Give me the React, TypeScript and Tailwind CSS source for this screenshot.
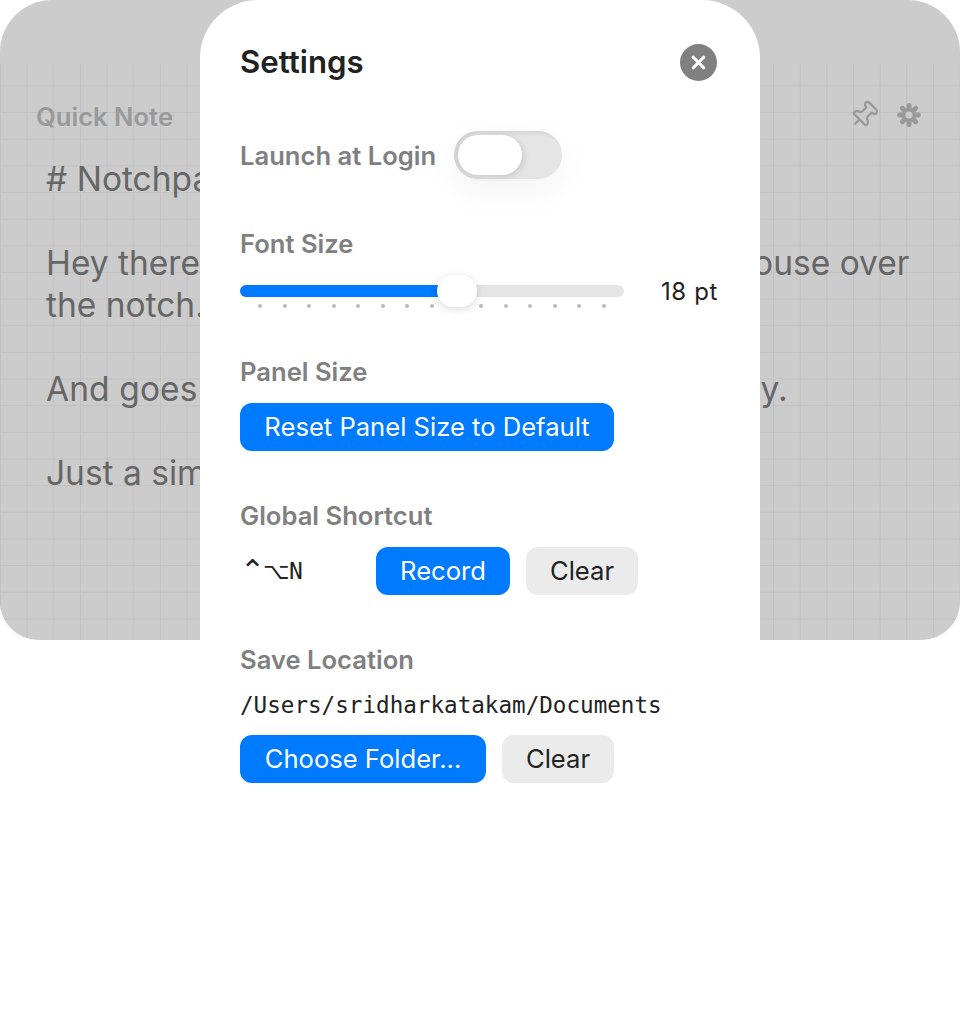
import { Pin, X } from 'lucide-react';

const dots = Array.from({ length: 15 }, (_, index) => index);

function GearIcon() {
  // eight rounded teeth around a ring
  const teeth = [0, 45, 90, 135];
  return (
    <svg width="26" height="26" viewBox="0 0 26 26" fill="none">
      {teeth.map((angle) => (
        <line
          key={angle}
          x1="13"
          y1="3.6"
          x2="13"
          y2="22.4"
          stroke="#999999"
          strokeWidth="5"
          strokeLinecap="round"
          transform={`rotate(${angle} 13 13)`}
        />
      ))}
      <circle cx="13" cy="13" r="7" fill="#999999" />
      <circle cx="13" cy="13" r="3.6" fill="#cccccc" />
    </svg>
  );
}

function SectionLabel({ children }: { children: React.ReactNode }) {
  return <div className="text-[25.6px] leading-[32px] font-semibold text-[#808080]">{children}</div>;
}

function NotePanel() {
  return (
    <div className="h-[640px] w-[960px] rounded-t-[52px] rounded-b-[38px] bg-[#cccccc] pt-16 overflow-hidden">
      <div className="h-[576px] bg-[linear-gradient(to_right,#c1c1c1_1px,transparent_1px),linear-gradient(to_bottom,#c1c1c1_1px,transparent_1px)] bg-[size:26.667px_26.667px] bg-[position:0_21.333px]">
        <div className="flex items-center justify-between pl-9 pr-[38px] pt-[35px] h-[70px]">
          <span className="text-[25.6px] leading-[32px] font-semibold text-[#999999]">Quick Note</span>
          <div className="flex items-center gap-[17px] -mt-[4px]">
            <Pin size={30} strokeWidth={1.8} className="text-[#999999] rotate-45 -ml-[1px]" />
            <GearIcon />
          </div>
        </div>
        <div className="pl-[46px] pt-[24px] text-[33.5px] leading-[42px] whitespace-nowrap text-[#666666]">
          <p># Notchpad</p>
          <p className="mt-[42px]">
            Hey there This is a note that shows as you mouse over
            <br />
            the notch.
          </p>
          <p className="mt-[42px] tracking-[0.1px]">And goes away, as you move the mouse away.</p>
          <p className="mt-[42px]">Just a simple note.</p>
        </div>
      </div>
    </div>
  );
}

function SettingsPanel() {
  return (
    <div className="absolute left-[200px] top-0 h-[1020px] w-[560px] rounded-t-[58px] bg-white px-10 text-[#222222]">
      <div className="flex h-[43px] items-center justify-between mt-[41px] pr-[3px]">
        <h1 className="text-[31.2px] leading-[40px] font-semibold text-[#222222] -mt-[2px]">Settings</h1>
        <div className="flex h-[37px] w-[37px] items-center justify-center rounded-full bg-[#808080]">
          <X size={21} strokeWidth={3.6} className="text-white" />
        </div>
      </div>

      <div className="mt-[47px] flex h-12 items-center gap-[18px]">
        <div className="mt-[1px]">
          <SectionLabel>Launch at Login</SectionLabel>
        </div>
        <div className="flex h-12 w-[108px] items-center rounded-full bg-[#e5e5e5] pl-1 shadow-[inset_4px_2px_5px_rgba(0,0,0,0.09),0_12px_36px_rgba(0,0,0,0.05)]">
          <div className="h-10 w-16 rounded-full bg-white shadow-[2px_2px_6px_rgba(0,0,0,0.12)]" />
        </div>
      </div>

      <div className="mt-[49px]">
        <SectionLabel>Font Size</SectionLabel>
      </div>
      <div className="mt-[15px] flex items-start">
        <div className="w-[384px]">
          <div className="relative h-3 rounded-full bg-[#e5e5e5] mt-[10px]">
            <div className="h-3 w-[208px] rounded-full bg-[#007aff]" />
            <div className="absolute left-[197px] -top-[10px] h-8 w-10 rounded-[16px] bg-white shadow-[0_2px_8px_rgba(0,0,0,0.15)]" />
          </div>
          <div className="mt-[7px] flex justify-between pl-[18px] pr-[18px]">
            {dots.map((dot) => (
              <div key={dot} className={`h-1 w-1 rounded-full ${dot === 8 ? 'bg-white' : 'bg-[#bbbbbb]'}`} />
            ))}
          </div>
        </div>
        <span className="ml-[37px] mt-[1px] text-[24px] leading-8 tracking-[0.6px] text-[#222222]">18 pt</span>
      </div>

      <div className="mt-[48px]">
        <SectionLabel>Panel Size</SectionLabel>
      </div>
      <div className="mt-[15px] flex h-12 w-[374px] items-center justify-center rounded-xl bg-[#007aff] text-[25.6px] text-white">
        Reset Panel Size to Default
      </div>

      <div className="mt-[49px]">
        <SectionLabel>Global Shortcut</SectionLabel>
      </div>
      <div className="mt-[15px] flex items-center">
        <span className="flex w-[136px] items-center text-[#222222]">
          <span className="w-[20px] text-center font-['DejaVu_Sans',sans-serif] text-[30px] leading-8">⌃</span>
          <span className="ml-[3px] w-[22px] text-center font-['DejaVu_Sans',sans-serif] text-[23px] leading-8">⌥</span>
          <span className="ml-[1px] w-[20px] text-center font-['DejaVu_Sans_Mono',monospace] text-[23px] leading-8">N</span>
        </span>
        <div className="flex h-12 w-[134px] items-center justify-center rounded-xl bg-[#007aff] text-[25.6px] text-white">Record</div>
        <div className="ml-4 flex h-12 w-[112px] items-center justify-center rounded-xl bg-[#ebebeb] text-[25.6px] text-[#222222]">Clear</div>
      </div>

      <div className="mt-[49px]">
        <SectionLabel>Save Location</SectionLabel>
      </div>
      <div className="mt-[14px] font-['DejaVu_Sans_Mono',monospace] text-[22.6px] leading-[30px] text-[#222222]">
        /Users/sridharkatakam/Documents
      </div>
      <div className="mt-[15px] flex items-center gap-4">
        <div className="flex h-12 w-[246px] items-center justify-center rounded-xl bg-[#007aff] text-[25.6px] text-white">Choose Folder...</div>
        <div className="flex h-12 w-[112px] items-center justify-center rounded-xl bg-[#ebebeb] text-[25.6px] text-[#222222]">Clear</div>
      </div>
    </div>
  );
}

export default function App() {
  return (
    <div className="relative h-[1020px] w-[960px] overflow-hidden bg-white font-['Inter',sans-serif]">
      <NotePanel />
      <SettingsPanel />
    </div>
  );
}
